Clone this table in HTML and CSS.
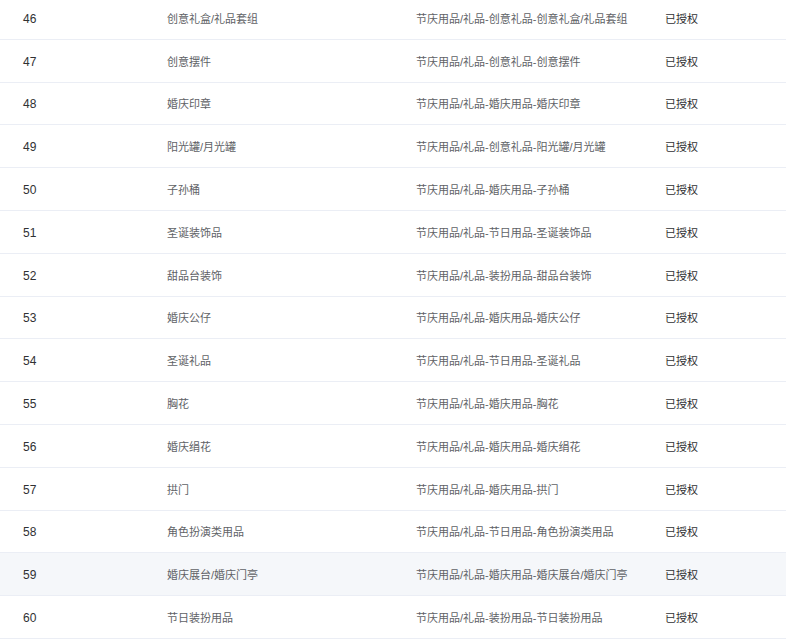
FILE: index.html
```html
<!DOCTYPE html>
<html lang="zh-CN">
<head>
<meta charset="utf-8">
<link rel="stylesheet" href="styles.css">
</head>
<body>
<div class="viewport">
<table class="grid">
<colgroup><col class="c1"><col class="c2"><col class="c3"><col class="c4"></colgroup>
<tbody>
<tr><td class="num">46</td><td class="name">创意礼盒/礼品套组</td><td class="cat">节庆用品/礼品-创意礼品-创意礼盒/礼品套组</td><td class="st">已授权</td></tr>
<tr><td class="num">47</td><td class="name">创意摆件</td><td class="cat">节庆用品/礼品-创意礼品-创意摆件</td><td class="st">已授权</td></tr>
<tr><td class="num">48</td><td class="name">婚庆印章</td><td class="cat">节庆用品/礼品-婚庆用品-婚庆印章</td><td class="st">已授权</td></tr>
<tr><td class="num">49</td><td class="name">阳光罐/月光罐</td><td class="cat">节庆用品/礼品-创意礼品-阳光罐/月光罐</td><td class="st">已授权</td></tr>
<tr><td class="num">50</td><td class="name">子孙桶</td><td class="cat">节庆用品/礼品-婚庆用品-子孙桶</td><td class="st">已授权</td></tr>
<tr><td class="num">51</td><td class="name">圣诞装饰品</td><td class="cat">节庆用品/礼品-节日用品-圣诞装饰品</td><td class="st">已授权</td></tr>
<tr><td class="num">52</td><td class="name">甜品台装饰</td><td class="cat">节庆用品/礼品-装扮用品-甜品台装饰</td><td class="st">已授权</td></tr>
<tr><td class="num">53</td><td class="name">婚庆公仔</td><td class="cat">节庆用品/礼品-婚庆用品-婚庆公仔</td><td class="st">已授权</td></tr>
<tr><td class="num">54</td><td class="name">圣诞礼品</td><td class="cat">节庆用品/礼品-节日用品-圣诞礼品</td><td class="st">已授权</td></tr>
<tr><td class="num">55</td><td class="name">胸花</td><td class="cat">节庆用品/礼品-婚庆用品-胸花</td><td class="st">已授权</td></tr>
<tr><td class="num">56</td><td class="name">婚庆绢花</td><td class="cat">节庆用品/礼品-婚庆用品-婚庆绢花</td><td class="st">已授权</td></tr>
<tr><td class="num">57</td><td class="name">拱门</td><td class="cat">节庆用品/礼品-婚庆用品-拱门</td><td class="st">已授权</td></tr>
<tr><td class="num">58</td><td class="name">角色扮演类用品</td><td class="cat">节庆用品/礼品-节日用品-角色扮演类用品</td><td class="st">已授权</td></tr>
<tr class="hover"><td class="num">59</td><td class="name">婚庆展台/婚庆门亭</td><td class="cat">节庆用品/礼品-婚庆用品-婚庆展台/婚庆门亭</td><td class="st">已授权</td></tr>
<tr><td class="num">60</td><td class="name">节日装扮用品</td><td class="cat">节庆用品/礼品-装扮用品-节日装扮用品</td><td class="st">已授权</td></tr>
</tbody>
</table>
</div>
</body>
</html>
```
FILE: styles.css
```css
html, body {
  margin: 0;
  padding: 0;
  background: #ffffff;
  overflow: hidden;
}
.viewport {
  width: 786px;
  height: 643px;
  overflow: hidden;
}
.grid {
  width: 786px;
  border-collapse: collapse;
  table-layout: fixed;
  margin-top: -3px;
  font-family: "Liberation Sans", "Noto Sans CJK SC", sans-serif;
  font-size: 11px;
}
.c1 { width: 167px; }
.c2 { width: 249px; }
.c3 { width: 249px; }
.c4 { width: 121px; }
.grid td {
  height: 39.8px;
  padding: 2px 0 0 0;
  border-bottom: 1px solid #ebeef5;
  line-height: 16px;
  white-space: nowrap;
  vertical-align: middle;
}
.grid td.num {
  padding-left: 23px;
  font-size: 12px;
  color: #303133;
}
.grid td.name, .grid td.cat {
  color: #606266;
}
.grid td.st {
  color: #303133;
}
.grid tr.hover td {
  background: #f5f7fa;
}
```
